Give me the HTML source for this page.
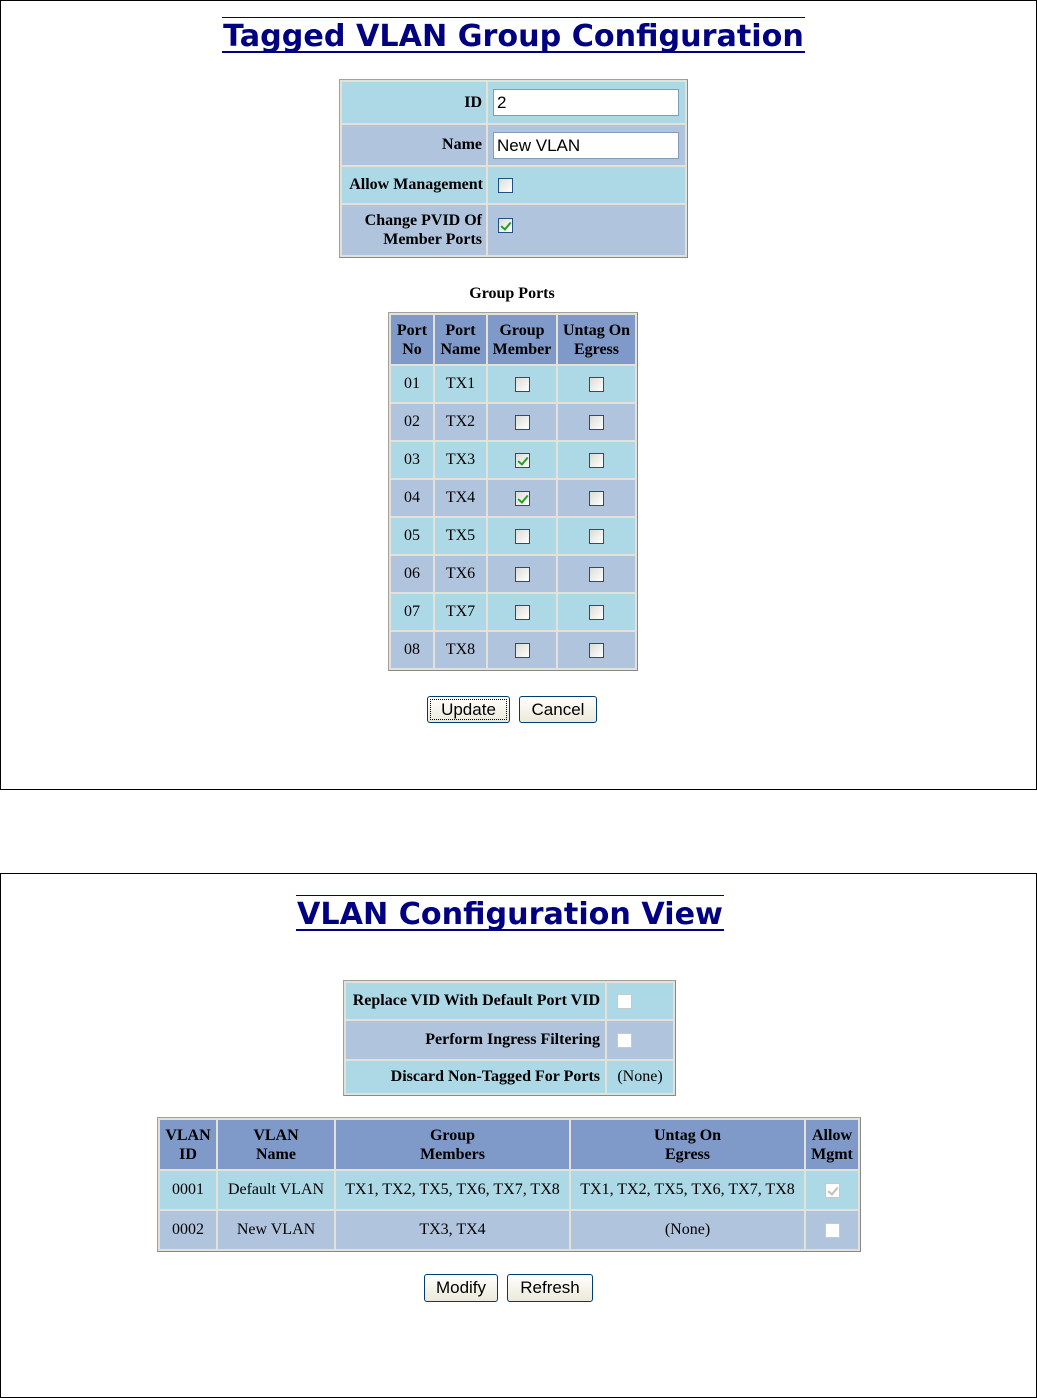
<!DOCTYPE html>
<html><head><meta charset="utf-8"><style>
body{margin:0;width:1037px;height:1398px;background:#fff;position:relative;font-family:"Liberation Serif",serif;}
.panel{position:absolute;left:0;width:1035px;border:1px solid #000;}
.title{position:absolute;font-family:"DejaVu Sans",sans-serif;font-weight:bold;color:#000080;text-align:center;border-top:1px solid #000080;border-bottom:2px solid #000080;line-height:33px;white-space:nowrap;font-size:30.2px;}
.title span{position:relative;top:2px}
table{position:absolute;border-collapse:separate;border-spacing:2px;background:#e4e2d8;border:1px solid #a0a0a0;border-right-color:#888;border-bottom-color:#888;font-size:16px;table-layout:fixed;}
td{padding:0 4px;}
.c{background:#add8e6}.s{background:#b0c4de}.h{background:#7f99c8;font-weight:bold;text-align:center;line-height:19px}
.h td{padding:0}
.lbl{font-weight:bold;text-align:right;}
.cb{display:inline-block;width:15px;height:15px;border:1px solid #1c5180;background:linear-gradient(135deg,#dcdcd6,#fff);vertical-align:middle;position:relative;box-sizing:border-box;}
.cb.k::after{content:"";position:absolute;left:4px;top:1px;width:4px;height:8px;border:solid #21a121;border-width:0 2px 2px 0;transform:rotate(40deg);}
.cb.d{border-color:#c8c8c8;background:#fff;}
.cb.d.k::after{border-color:#c0c0c0;}
.inp{display:inline-block;width:186px;height:27px;border:1px solid #7f9db9;background:#fff;box-sizing:border-box;font-family:"Liberation Sans",sans-serif;font-size:17px;line-height:25px;padding-left:3px;}
.btn{position:absolute;font-family:"Liberation Sans",sans-serif;font-size:17px;text-align:center;border:1px solid #003c74;border-radius:3px;background:linear-gradient(#fff,#ece9d8);box-sizing:border-box;line-height:25px;}
.ctr td{text-align:center}
</style></head><body>
<div class="panel" style="top:0;height:788px"></div>
<div class="panel" style="top:873px;height:523px"></div>

<div class="title" style="left:222px;top:17px;width:583px;"><span>Tagged VLAN Group Configuration</span></div>

<table style="left:339px;top:79px;width:349px;">
<tr class="c" style="height:41px"><td class="lbl" style="width:136px">ID</td><td style="padding-left:5px"><span class="inp">2</span></td></tr>
<tr class="s" style="height:40px"><td class="lbl">Name</td><td style="padding-left:5px"><span class="inp">New VLAN</span></td></tr>
<tr class="c" style="height:36px"><td class="lbl" style="padding-right:3px">Allow Management</td><td style="padding-left:10px"><span class="cb"></span></td></tr>
<tr class="s" style="height:50px"><td class="lbl" style="line-height:19px;vertical-align:top;padding-top:6px">Change PVID Of<br>Member Ports</td><td style="padding-left:10px;vertical-align:top;padding-top:11px"><span class="cb k"></span></td></tr>
</table>

<div style="position:absolute;left:412px;width:200px;top:285px;text-align:center;font-weight:bold;font-size:16px">Group Ports</div>

<table class="ctr" style="left:388px;top:312px;width:250px;">
<tr class="h" style="height:49px"><td style="width:42px">Port<br>No</td><td style="width:51px">Port<br>Name</td><td style="width:68px">Group<br>Member</td><td>Untag On<br>Egress</td></tr>
<tr class="c" style="height:36px"><td>01</td><td>TX1</td><td><span class="cb"></span></td><td><span class="cb"></span></td></tr>
<tr class="s" style="height:36px"><td>02</td><td>TX2</td><td><span class="cb"></span></td><td><span class="cb"></span></td></tr>
<tr class="c" style="height:36px"><td>03</td><td>TX3</td><td><span class="cb k"></span></td><td><span class="cb"></span></td></tr>
<tr class="s" style="height:36px"><td>04</td><td>TX4</td><td><span class="cb k"></span></td><td><span class="cb"></span></td></tr>
<tr class="c" style="height:36px"><td>05</td><td>TX5</td><td><span class="cb"></span></td><td><span class="cb"></span></td></tr>
<tr class="s" style="height:36px"><td>06</td><td>TX6</td><td><span class="cb"></span></td><td><span class="cb"></span></td></tr>
<tr class="c" style="height:36px"><td>07</td><td>TX7</td><td><span class="cb"></span></td><td><span class="cb"></span></td></tr>
<tr class="s" style="height:36px"><td>08</td><td>TX8</td><td><span class="cb"></span></td><td><span class="cb"></span></td></tr>
</table>

<div class="btn" style="left:427px;top:696px;width:83px;height:27px;outline:1px dotted #000;outline-offset:-4px">Update</div>
<div class="btn" style="left:519px;top:696px;width:78px;height:27px">Cancel</div>

<div class="title" style="left:296px;top:895px;width:428px;"><span>VLAN Configuration View</span></div>

<table style="left:343px;top:980px;width:333px;">
<tr class="c" style="height:36px"><td class="lbl" style="width:254px;padding:0 5px 0 0">Replace VID With Default Port VID</td><td style="padding-left:10px"><span class="cb d"></span></td></tr>
<tr class="s" style="height:38px"><td class="lbl" style="padding:0 5px 0 0">Perform Ingress Filtering</td><td style="padding-left:10px"><span class="cb d"></span></td></tr>
<tr class="c" style="height:32px"><td class="lbl" style="padding:0 5px 0 0">Discard Non-Tagged For Ports</td><td style="text-align:center;padding:0">(None)</td></tr>
</table>

<table class="ctr" style="left:157px;top:1117px;width:704px;">
<tr class="h" style="height:49px"><td style="width:56px">VLAN<br>ID</td><td style="width:116px">VLAN<br>Name</td><td style="width:233px">Group<br>Members</td><td style="width:233px">Untag On<br>Egress</td><td>Allow<br>Mgmt</td></tr>
<tr class="c" style="height:38px"><td style="padding:0">0001</td><td style="padding:0">Default VLAN</td><td style="padding:0">TX1, TX2, TX5, TX6, TX7, TX8</td><td style="padding:0">TX1, TX2, TX5, TX6, TX7, TX8</td><td style="padding:0"><span class="cb d k"></span></td></tr>
<tr class="s" style="height:38px"><td style="padding:0">0002</td><td style="padding:0">New VLAN</td><td style="padding:0">TX3, TX4</td><td style="padding:0">(None)</td><td style="padding:0"><span class="cb d"></span></td></tr>
</table>

<div class="btn" style="left:424px;top:1274px;width:74px;height:28px">Modify</div>
<div class="btn" style="left:507px;top:1274px;width:86px;height:28px">Refresh</div>
</body></html>
